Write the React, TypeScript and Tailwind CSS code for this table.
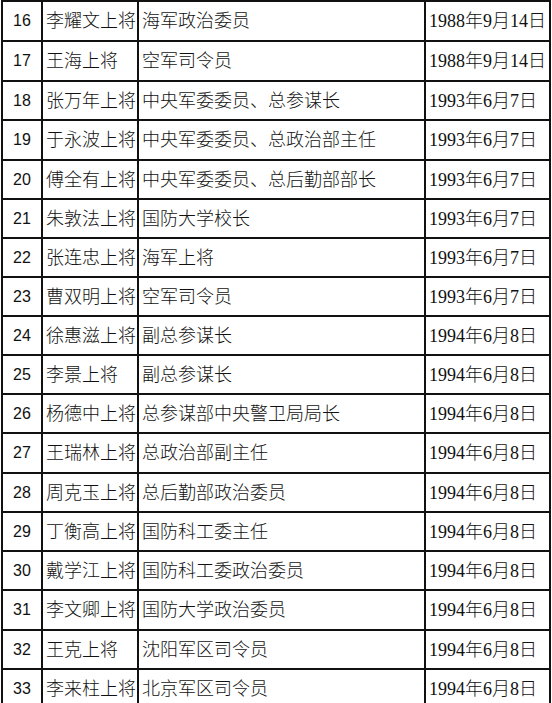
const rows: [string, string, string, string, number][] = [
  ['16', '李耀文上将', '海军政治委员', '1988年9月14日', 40],
  ['17', '王海上将', '空军司令员', '1988年9月14日', 40],
  ['18', '张万年上将', '中央军委委员、总参谋长', '1993年6月7日', 39],
  ['19', '于永波上将', '中央军委委员、总政治部主任', '1993年6月7日', 40],
  ['20', '傅全有上将', '中央军委委员、总后勤部部长', '1993年6月7日', 39],
  ['21', '朱敦法上将', '国防大学校长', '1993年6月7日', 39],
  ['22', '张连忠上将', '海军上将', '1993年6月7日', 39],
  ['23', '曹双明上将', '空军司令员', '1993年6月7日', 39],
  ['24', '徐惠滋上将', '副总参谋长', '1994年6月8日', 39],
  ['25', '李景上将', '副总参谋长', '1994年6月8日', 39],
  ['26', '杨德中上将', '总参谋部中央警卫局局长', '1994年6月8日', 39],
  ['27', '王瑞林上将', '总政治部副主任', '1994年6月8日', 40],
  ['28', '周克玉上将', '总后勤部政治委员', '1994年6月8日', 39],
  ['29', '丁衡高上将', '国防科工委主任', '1994年6月8日', 39],
  ['30', '戴学江上将', '国防科工委政治委员', '1994年6月8日', 39],
  ['31', '李文卿上将', '国防大学政治委员', '1994年6月8日', 40],
  ['32', '王克上将', '沈阳军区司令员', '1994年6月8日', 39],
  ['33', '李来柱上将', '北京军区司令员', '1994年6月8日', 39],
];

const cjk = "font-['Liberation_Serif','Noto_Sans_CJK_SC',serif]";

export default function App() {
  return (
    <div className="w-[552px] h-[703px] overflow-hidden bg-white text-[#111]">
      <div className="ml-[1px] w-[550px] border-l-2 border-t-2 border-[#111]">
        {rows.map(([no, name, post, date, h]) => (
          <div
            key={no}
            className={`grid grid-cols-[40px_96px_287px_125px] ${h === 40 ? 'h-[40px]' : 'h-[39px]'}`}
          >
            <div className="flex items-center justify-center border-r-2 border-b-2 border-[#111] font-['Liberation_Sans',sans-serif] text-[16px] leading-none">
              {no}
            </div>
            <div className={`flex items-center pl-[3px] border-r-2 border-b-2 border-[#111] ${cjk} text-[18px] leading-none font-light whitespace-nowrap`}>
              {name}
            </div>
            <div className={`flex items-center pl-[3px] border-r-2 border-b-2 border-[#111] ${cjk} text-[18px] leading-none font-light whitespace-nowrap`}>
              {post}
            </div>
            <div className={`flex items-center pl-[3px] border-r-2 border-b-2 border-[#111] ${cjk} text-[18px] leading-none font-light whitespace-nowrap`}>
              {date}
            </div>
          </div>
        ))}
      </div>
    </div>
  );
}
